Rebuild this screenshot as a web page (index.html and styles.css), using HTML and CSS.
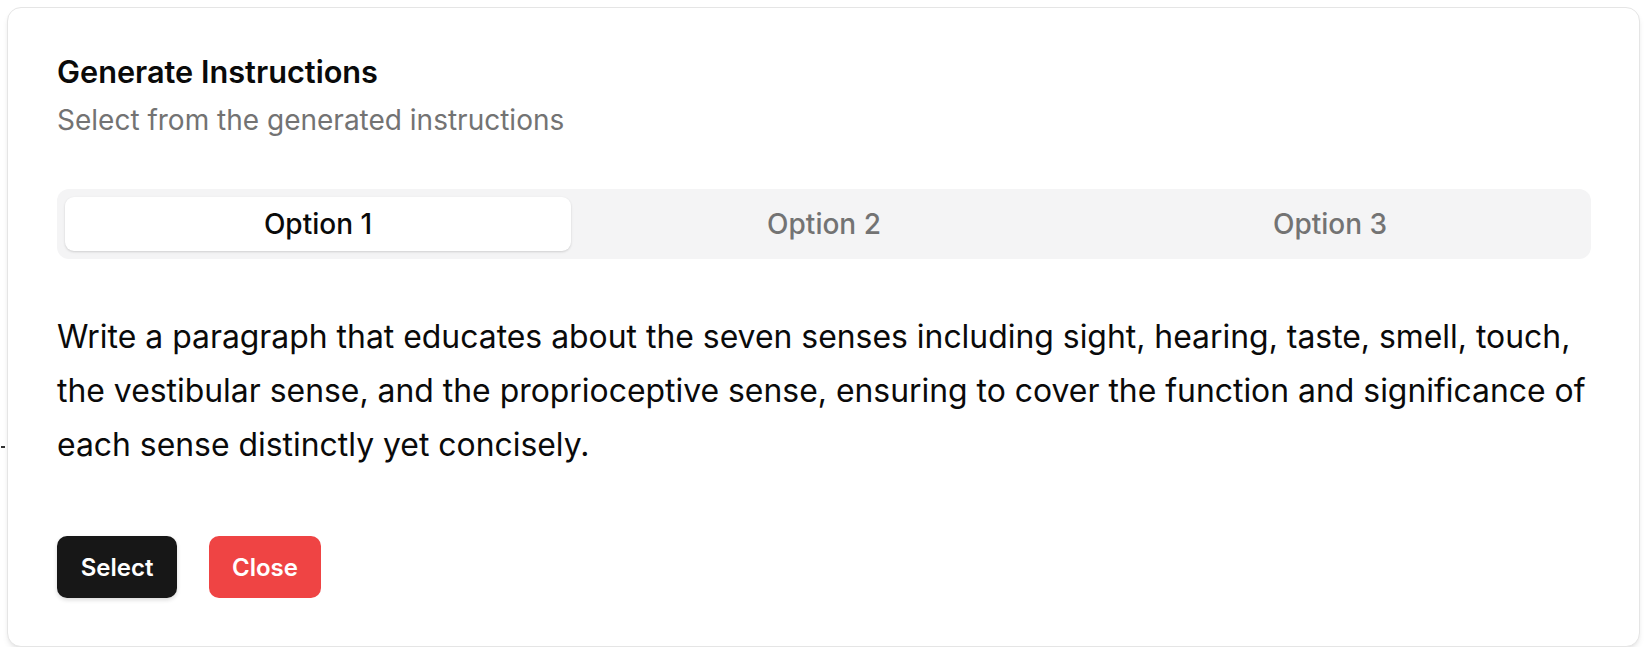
FILE: index.html
```html
<!DOCTYPE html>
<html lang="en">
<head>
<meta charset="utf-8">
<title>Generate Instructions</title>
<link rel="stylesheet" href="styles.css">
</head>
<body>
<span class="stray"></span>
<div class="card">
  <header class="card-header">
    <h2 class="title">Generate Instructions</h2>
    <p class="subtitle">Select from the generated instructions</p>
  </header>
  <div class="tabs">
    <button class="tab active">Option 1</button>
    <button class="tab">Option 2</button>
    <button class="tab">Option 3</button>
  </div>
  <p class="instruction">Write a paragraph that educates about the seven senses including sight, hearing, taste, smell, touch, the vestibular sense, and the proprioceptive sense, ensuring to cover the function and significance of each sense distinctly yet concisely.</p>
  <div class="actions">
    <button class="btn btn-dark">Select</button>
    <button class="btn btn-red">Close</button>
  </div>
</div>
</body>
</html>
```
FILE: styles.css
```css
* { box-sizing: border-box; }
html, body { background: #ffffff; }
body {
  margin: 0;
  padding: 7px 12px 0 7px;
  font-family: Inter, "Noto Sans", sans-serif;
  color: #0a0a0a;
  position: relative;
}
.stray {
  position: absolute;
  left: 1px;
  top: 446px;
  width: 4px;
  height: 2px;
  background: #333;
}
.card {
  width: 1633px;
  border: 1px solid #e5e5e5;
  border-radius: 14px;
  background: #fff;
  padding: 48px 48px 48px 49px;
  box-shadow: 0 4px 6px -1px rgba(0,0,0,0.08), 0 2px 4px -2px rgba(0,0,0,0.08);
}
.card-header { display: flex; flex-direction: column; }
.title {
  margin: 0;
  font-size: 30.7px;
  line-height: 32px;
  font-weight: 600;
}
.subtitle {
  margin: 12px 0 0;
  font-size: 28px;
  line-height: 40px;
  color: #737373;
}
.tabs {
  margin-top: 49px;
  display: grid;
  grid-template-columns: 1fr 1fr 1fr;
  padding: 8px;
  background: #f4f4f5;
  border-radius: 12px;
  height: 70px;
}
.tab {
  font-family: inherit;
  font-size: 28px;
  font-weight: 500;
  color: #737373;
  background: transparent;
  border: 0;
  border-radius: 9px;
  padding: 0;
}
.tab.active {
  background: #fff;
  color: #0a0a0a;
  box-shadow: 0 1px 3px rgba(0,0,0,0.1), 0 1px 2px rgba(0,0,0,0.06);
}
.instruction {
  margin: 51px -20px 0 0;
  font-size: 31.9px;
  line-height: 54px;
  color: #0a0a0a;
}
.actions {
  margin-top: 64px;
  display: flex;
  gap: 32px;
}
.btn {
  font-family: inherit;
  font-size: 24px;
  font-weight: 600;
  color: #fff;
  border: 0;
  border-radius: 10px;
  height: 62px;
  padding: 0;
}
.btn-dark { background: #171717; width: 120px; box-shadow: 0 2px 4px rgba(0,0,0,0.15); }
.btn-red { background: #ef4444; width: 112px; }
```
